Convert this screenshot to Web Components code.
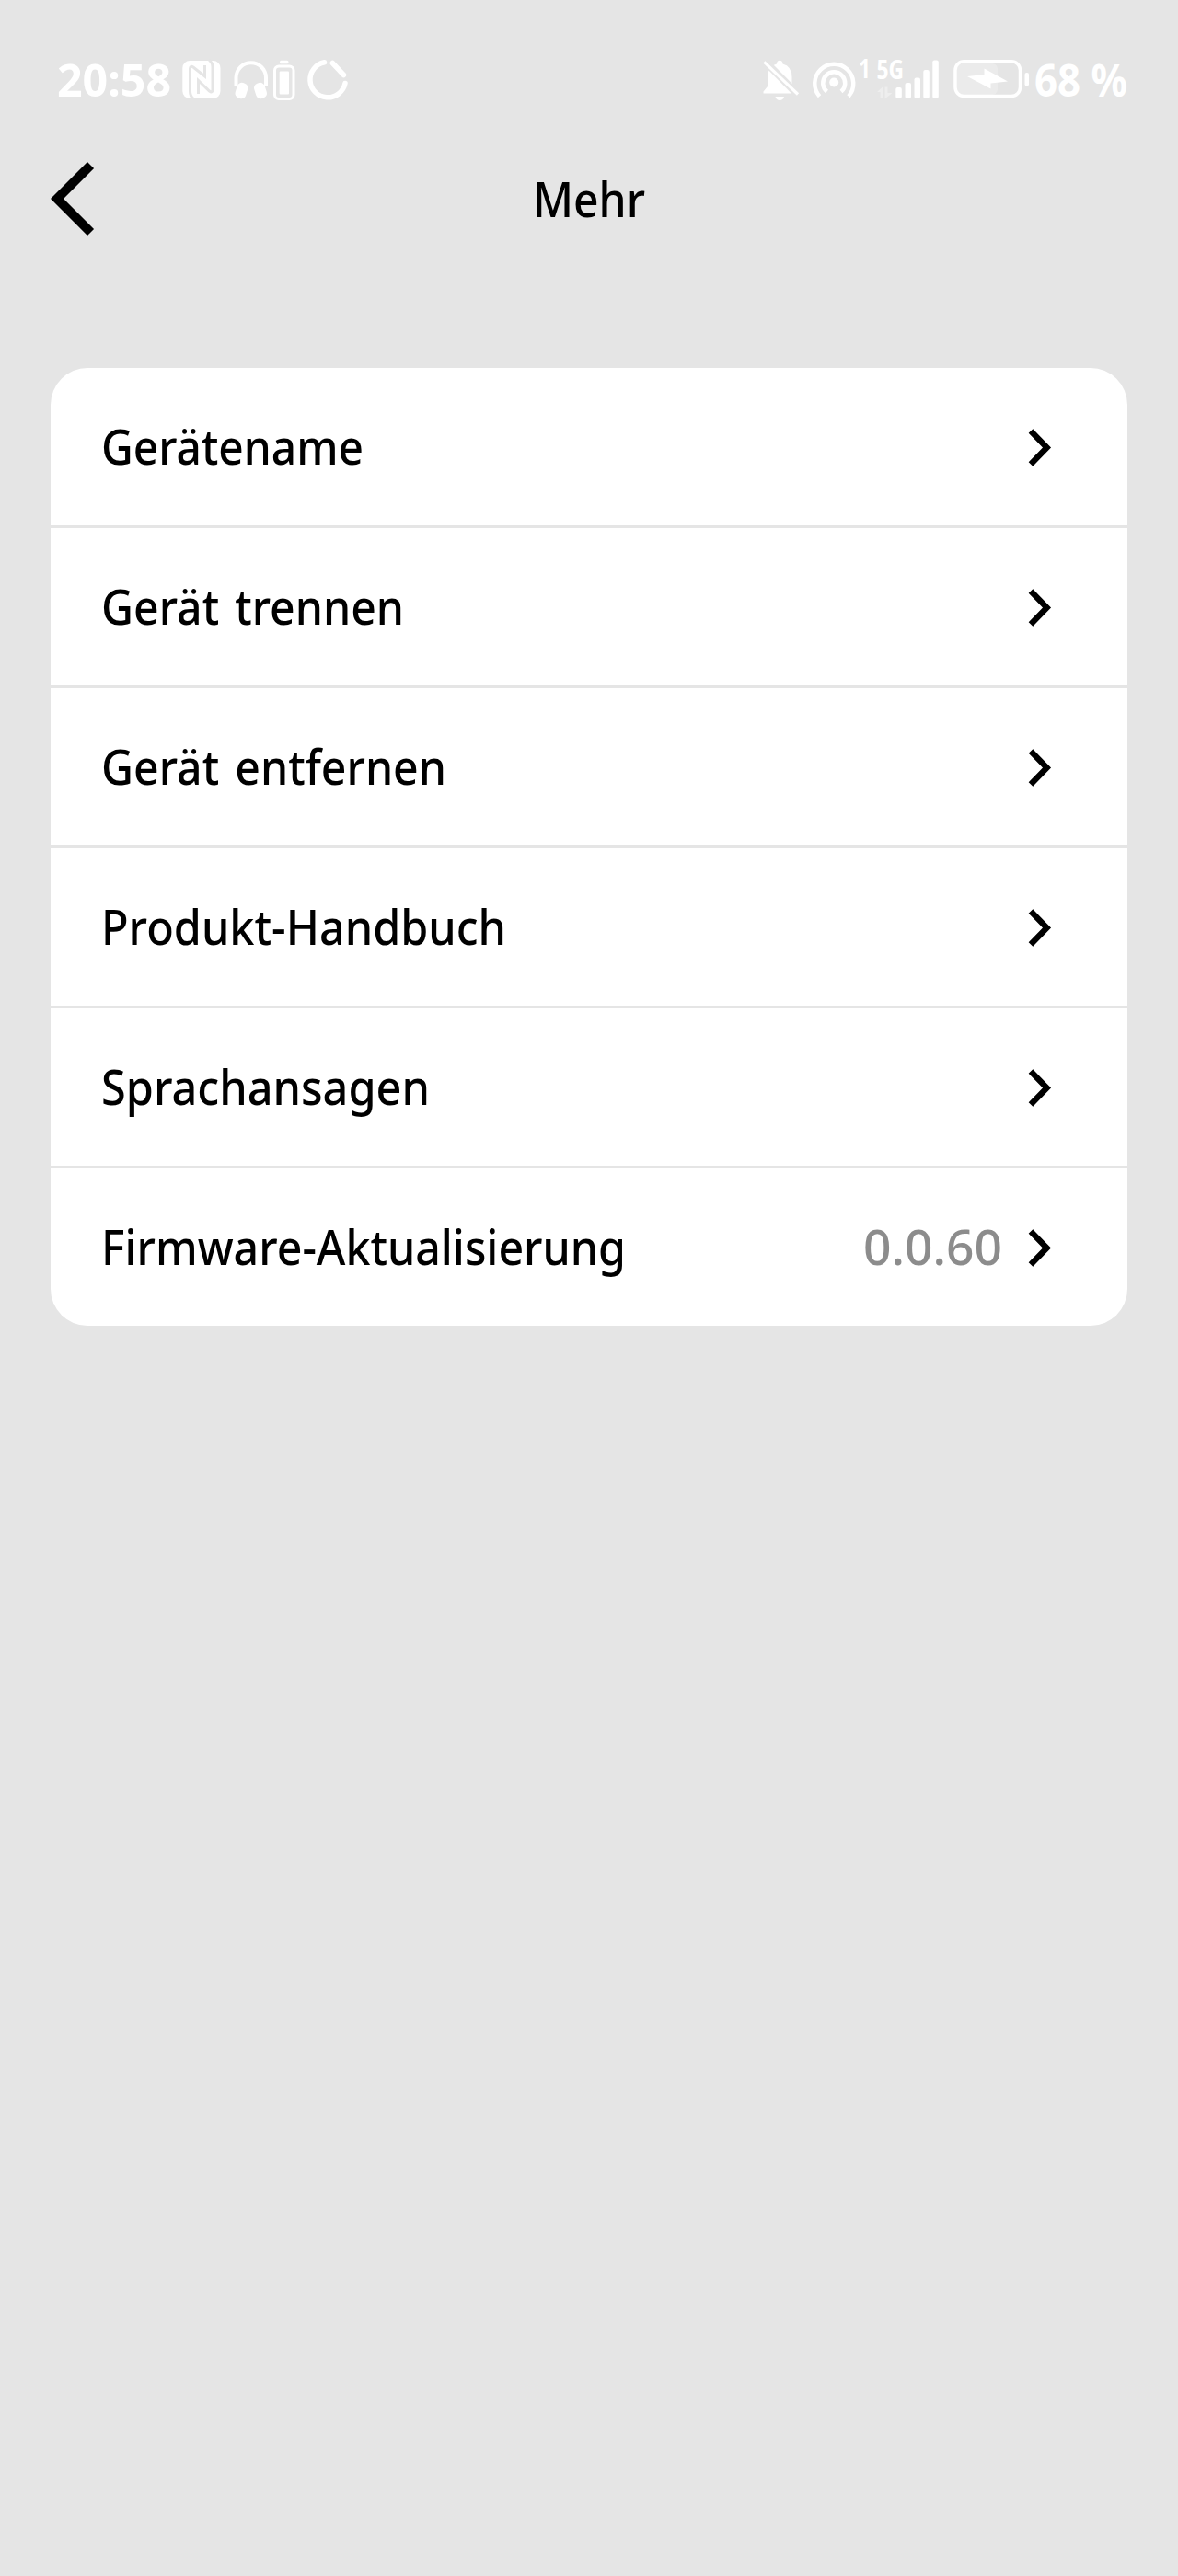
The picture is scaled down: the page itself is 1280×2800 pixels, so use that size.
<!DOCTYPE html>
<html lang="de">
<head>
<meta charset="utf-8">
<title>Mehr</title>
<style>
    html, body {
        margin: 0;
        background: #e5e5e5;
    }

    body {
        font-family: "Noto Sans", "Open Sans", sans-serif;
        color: black;
    }
</style>
</head>
<body>
<more-screen></more-screen>

<script>
// text whose glyphs are condensed or stretched so that it fills a given width
class FitText extends HTMLElement {
    connectedCallback() {
        this.attachShadow({ mode: "open" }).innerHTML = `<style>
            :host {
                display: block;
                white-space: pre;
                flex: none;
            }

            span {
                display: inline-block;
                vertical-align: top;
                transform-origin: left;
            }
        </style><span><slot></slot></span>`
        const span = this.shadowRoot.querySelector("span")
        const width = Number(this.getAttribute("width"))
        const natural = span.getBoundingClientRect().width
        span.style.transform = `scaleX(${width / natural})`
        this.style.width = `${width}px`
    }
}

class StatusBar extends HTMLElement {
    connectedCallback() {
        this.attachShadow({ mode: "open" }).innerHTML = `<style>
            :host {
                display: flex;
                justify-content: space-between;
                align-items: center;
                height: 46px;
                padding: 64px 55px 0 62px;
                color: white;
                font-size: 48px;
                font-weight: 700;
                line-height: 44px;
            }

            div {
                display: flex;
                align-items: center;
            }

            svg {
                display: block;
                fill: currentColor;
                overflow: visible;
            }

            .line {
                fill: none;
                stroke: currentColor;
            }

            .groove {
                fill: none;
                stroke: #e5e5e5;
            }
        </style>
        <div>
            <fit-text width="124">20:58</fit-text>
            <svg style="margin-left: 12px" width="42" height="46" viewBox="198 64 42 46">
                <rect x="198.3" y="66" width="41.2" height="41" rx="8"/>
                <path class="groove" stroke-width="3" d="M210.500 107.500Q206.500 105 206.500 99V75Q206.500 71 210 73L222.500 83V71M227 65.500Q231 67.500 231 73V97Q231 101.500 227.500 99L215.500 87.500V102"/>
            </svg>
            <svg style="margin-left: 14px" width="38" height="46" viewBox="254 64 38 46">
                <path class="line" stroke-width="4" d="M256.500 94V84.500a16 16 0 0 1 32.500 0V94"/>
                <rect x="256.500" y="90" width="12" height="17" rx="5" transform="rotate(18 262.500 98.500)"/>
                <rect x="277" y="90" width="12" height="17" rx="5" transform="rotate(-18 283 98.500)"/>
            </svg>
            <svg style="margin-left: 4px" width="26" height="46" viewBox="296 64 26 46">
                <rect x="304" y="65.700" width="9.500" height="3.600" rx="1.500"/>
                <rect class="line" stroke-width="3" x="298.500" y="72" width="20.500" height="35.500" rx="4.500"/>
                <rect x="303.700" y="77.500" width="10.300" height="25" rx="1"/>
            </svg>
            <svg style="margin-left: 12px" width="46" height="46" viewBox="334 64 46 46">
                <path class="line" stroke-width="5.500" stroke-linecap="round" d="M352.500 67.800A19.200 19.200 0 1 0 375 90.500M361.300 68.500L373.500 81.500"/>
            </svg>
        </div>
        <div>
            <svg width="40" height="46" viewBox="828 64 40 46">
                <path d="M828.500 101.500V99.500L833 94V84Q833 72 843 69.500Q843 65.700 846.200 65.700Q849.500 65.700 849.500 69.500Q859.500 72 859.500 84V94L864 99.500V101.500ZM841.500 105H851Q850 109 846.200 109Q842.500 109 841.500 105Z"/>
                <path class="groove" stroke-width="8" d="M827 63.500L868 105"/>
                <path class="line" stroke-width="3.200" d="M829.300 67.300L866 102.500"/>
            </svg>
            <svg style="margin-left: 13px" width="49" height="46" viewBox="881 64 49 46">
                <circle cx="905.200" cy="89.500" r="5"/>
                <path class="line" stroke-width="4.500" d="M897.500 99.500A12 12 0 1 1 913 99.500M889.500 104.700A21 21 0 1 1 921 104.700"/>
            </svg>
            <svg style="margin-left: 2px" width="88" height="46" viewBox="932 64 88 46" font-size="28" font-weight="700">
                <text x="932" y="84.500" textLength="13" lengthAdjust="spacingAndGlyphs">1</text>
                <text x="951.500" y="85.500" textLength="29.500" lengthAdjust="spacingAndGlyphs">5G</text>
                <path opacity=".35" d="M952 100L958.500 94V106.500H955.500V100ZM960.500 94.500H963.500V101H968.500L960.500 107.500Z"/>
                <rect x="972.300" y="95" width="6.500" height="12" rx="2"/>
                <rect x="982.500" y="90" width="6.500" height="17" rx="2"/>
                <rect x="992.500" y="84.500" width="6.500" height="22.500" rx="2"/>
                <rect x="1002.300" y="76" width="6.500" height="31" rx="2"/>
                <rect x="1012.300" y="65.500" width="6.500" height="41.500" rx="2"/>
            </svg>
            <svg style="margin-left: 14px" width="84" height="46" viewBox="1034 64 84 46">
                <rect opacity=".25" x="1039" y="69" width="44" height="34" rx="6"/>
                <rect class="line" stroke-width="3.500" x="1037" y="66.700" width="70.500" height="37.800" rx="9.500"/>
                <rect x="1112.500" y="79" width="4.500" height="14.500" rx="2"/>
                <path d="M1050 83L1068.500 81V74.500L1094 88.500L1075.500 90.500V96.500Z"/>
            </svg>
            <fit-text style="margin-left: 5px" width="101">68 %</fit-text>
        </div>`
    }
}

class TitleBar extends HTMLElement {
    connectedCallback() {
        this.attachShadow({ mode: "open" }).innerHTML = `<style>
            :host {
                display: grid;
                grid-template-columns: 1fr auto 1fr;
                align-items: center;
                height: 82px;
                margin-top: 65px;
                padding: 0 55px;
                font-size: 52px;
                font-weight: 500;
                line-height: 80px;
            }

            svg {
                display: block;
            }
        </style>
        <svg width="48" height="82" viewBox="0 0 48 82">
            <path fill="none" stroke="black" stroke-width="10" d="M43.500 4.500L7 41L43.500 77.500"/>
        </svg>
        <slot></slot>`
    }
}

class MenuRow extends HTMLElement {
    connectedCallback() {
        const { label, width, value } = this.dataset
        this.attachShadow({ mode: "open" }).innerHTML = `<style>
            :host {
                display: flex;
                align-items: center;
                height: 171px;
                padding: 0 82px 0 55px;
                background: white;
                font-size: 52px;
                font-weight: 500;
                line-height: 170px;
                word-spacing: 5px;
            }

            fit-text {
                height: 171px;
            }

            .label {
                margin-right: auto;
            }

            .value {
                color: #8c8c8c;
                margin-right: 28px;
            }

            svg {
                display: block;
            }
        </style>
        <fit-text class="label" width="${width}">${label}</fit-text>
        ${value ? `<fit-text class="value" width="151">${value}</fit-text>` : ""}
        <svg width="26" height="42" viewBox="0 0 26 42">
            <path fill="none" stroke="black" stroke-width="6.500" d="M3 3.500L20.500 21.500L3 39.500"/>
        </svg>`
    }
}

class MenuCard extends HTMLElement {
    connectedCallback() {
        this.attachShadow({ mode: "open" }).innerHTML = `<style>
            :host {
                display: grid;
                gap: 3px;
                margin: 143px 55px 0;
                border-radius: 40px;
                overflow: hidden;
            }
        </style><slot></slot>`
    }
}

class MoreScreen extends HTMLElement {
    items = [
        { label: "Gerätename", width: 285 },
        { label: "Gerät trennen", width: 329 },
        { label: "Gerät entfernen", width: 375 },
        { label: "Produkt-Handbuch", width: 440 },
        { label: "Sprachansagen", width: 357 },
        { label: "Firmware-Aktualisierung", width: 570, value: "0.0.60" },
    ]

    connectedCallback() {
        const rows = this.items.map(({ label, width, value }) =>
            `<menu-row data-label="${label}" data-width="${width}"${value ? ` data-value="${value}"` : ""}></menu-row>`)

        this.attachShadow({ mode: "open" }).innerHTML = `<style>
            :host {
                display: flow-root;
                width: 1280px;
                height: 2800px;
                background: #e5e5e5;
            }
        </style>
        <status-bar></status-bar>
        <title-bar><fit-text width="122">Mehr</fit-text></title-bar>
        <menu-card>${rows.join("")}</menu-card>`
    }
}

customElements.define("fit-text", FitText)
customElements.define("status-bar", StatusBar)
customElements.define("title-bar", TitleBar)
customElements.define("menu-row", MenuRow)
customElements.define("menu-card", MenuCard)
customElements.define("more-screen", MoreScreen)
</script>
</body>
</html>
